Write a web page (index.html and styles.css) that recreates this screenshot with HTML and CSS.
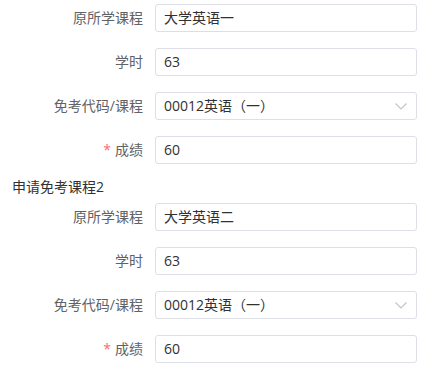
FILE: index.html
```html
<!DOCTYPE html>
<html lang="zh-CN">
<head>
<meta charset="utf-8">
<link rel="stylesheet" href="styles.css">
</head>
<body>
<div class="form">
  <div class="section">
    <div class="item"><label class="label">原所学课程</label><div class="input">大学英语一</div></div>
    <div class="item"><label class="label">学时</label><div class="input">63</div></div>
    <div class="item"><label class="label">免考代码/课程</label><div class="input select"><span>00012英语（一）</span><svg class="chev" width="12" height="7" viewBox="0 0 12 7"><polyline points="0.5,0.5 6,6 11.5,0.5" fill="none" stroke="#c0c4cc" stroke-width="1.2"/></svg></div></div>
    <div class="item last"><label class="label"><span class="req">*</span>成绩</label><div class="input">60</div></div>
  </div>
  <div class="heading">申请免考课程2</div>
  <div class="section">
    <div class="item"><label class="label">原所学课程</label><div class="input">大学英语二</div></div>
    <div class="item"><label class="label">学时</label><div class="input">63</div></div>
    <div class="item"><label class="label">免考代码/课程</label><div class="input select"><span>00012英语（一）</span><svg class="chev" width="12" height="7" viewBox="0 0 12 7"><polyline points="0.5,0.5 6,6 11.5,0.5" fill="none" stroke="#c0c4cc" stroke-width="1.2"/></svg></div></div>
    <div class="item"><label class="label"><span class="req">*</span>成绩</label><div class="input">60</div></div>
  </div>
</div>
</body>
</html>
```
FILE: styles.css
```css
html, body {
  margin: 0;
  padding: 0;
  background: #ffffff;
}
body {
  font-family: "Open Sans", "Noto Sans CJK SC", sans-serif;
  font-size: 14px;
  color: #303133;
}
.form {
  padding-top: 4px;
}
.item {
  display: flex;
  align-items: center;
  margin-bottom: 16px;
}
.item.last {
  margin-bottom: 14px;
}
.label {
  width: 143px;
  padding-right: 12px;
  text-align: right;
  color: #606266;
  line-height: 28px;
}
.req {
  color: #f56c6c;
  margin-right: 4px;
}
.input {
  box-sizing: border-box;
  width: 262px;
  height: 28px;
  border: 1px solid #dcdfe6;
  border-radius: 3px;
  padding: 0 8px;
  line-height: 26px;
  color: #303133;
}
.select {
  display: flex;
  align-items: center;
  justify-content: space-between;
  padding-right: 9px;
}
.chev {
  display: block;
}
.heading {
  padding-left: 12px;
  line-height: 18px;
  margin-bottom: 7px;
  color: #303133;
}
```
